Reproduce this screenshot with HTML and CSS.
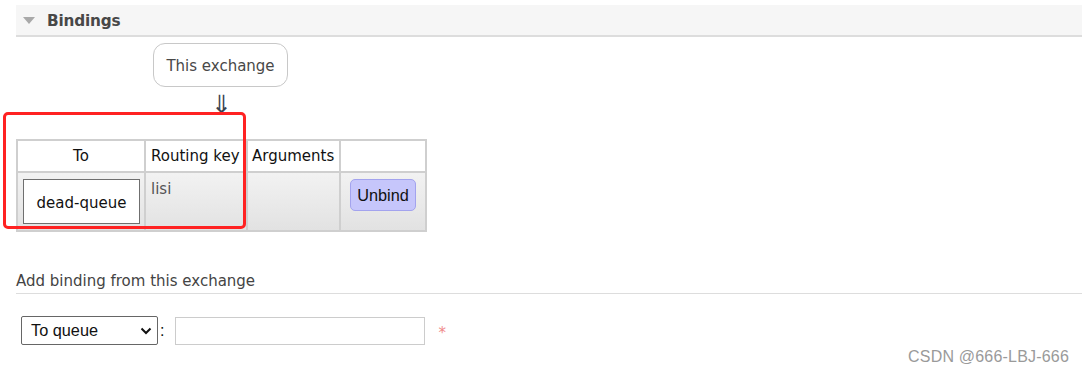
FILE: index.html
```html
<!DOCTYPE html>
<html>
<head>
<meta charset="utf-8">
<link rel="stylesheet" href="styles.css">
</head>
<body>
<div class="page">
  <div class="section-header">
    <span class="triangle"></span>
    <h2 class="section-title">Bindings</h2>
  </div>
  <div class="diagram">
    <div class="node">This exchange</div>
    <div class="arrow">⇓</div>
  </div>
  <table class="list">
    <thead>
      <tr>
        <th class="col-to">To</th>
        <th class="col-key">Routing key</th>
        <th class="col-args">Arguments</th>
        <th class="col-act"></th>
      </tr>
    </thead>
    <tbody>
      <tr>
        <td class="cell-to"><span class="queue-box">dead-queue</span></td>
        <td class="cell-key">lisi</td>
        <td class="cell-args"></td>
        <td class="cell-act"><button class="btn-unbind">Unbind</button></td>
      </tr>
    </tbody>
  </table>
  <h3 class="sub-title">Add binding from this exchange</h3>
  <div class="form-row">
    <div class="select-box">To queue<svg class="chev" width="12" height="8" viewBox="0 0 12 8"><path d="M1.5 1.5 L6 6 L10.5 1.5" fill="none" stroke="#111" stroke-width="2"/></svg></div>
    <span class="colon">:</span>
    <div class="text-input"></div>
    <span class="mand">*</span>
  </div>
  <div class="annotation"></div>
  <div class="watermark">CSDN @666-LBJ-666</div>
</div>
</body>
</html>
```
FILE: styles.css
```css
html, body { margin: 0; padding: 0; background: #fff; }
.page {
  position: relative;
  width: 1083px;
  height: 375px;
  overflow: hidden;
  font-family: "DejaVu Sans", Verdana, sans-serif;
  color: #484848;
}
.section-header {
  margin: 5px 1px 0 16px;
  height: 30px;
  background: #f6f6f6;
  border-bottom: 2px solid #dddddd;
  display: flex;
  align-items: center;
}
.triangle {
  width: 0; height: 0;
  margin-left: 7px;
  margin-right: 11px;
  margin-top: 1px;
  border-left: 6.5px solid transparent;
  border-right: 6.5px solid transparent;
  border-top: 7px solid #a9a9a9;
}
.section-title {
  margin: 1px 0 0 1px;
  font-size: 15.3px;
  font-weight: bold;
  color: #484848;
  letter-spacing: -0.2px;
}
.diagram {
  padding-left: 153px;
  padding-top: 6px;
}
.node {
  width: 133px;
  height: 39px;
  padding-top: 3px;
  border: 1px solid #c8c8c8;
  border-radius: 12px;
  display: flex;
  align-items: center;
  justify-content: center;
  font-size: 15px;
  line-height: 15px;
  color: #484848;
}
.arrow {
  margin-left: 58px;
  width: 20px;
  height: 22px;
  margin-top: 7px;
  margin-bottom: 23px;
  font-size: 25px;
  line-height: 22px;
  color: #3a4452;
  font-family: "DejaVu Sans", sans-serif;
}
table.list {
  margin: 0 0 0 16px;
  border-collapse: collapse;
  font-size: 15px;
}
table.list th, table.list td {
  border: 2px solid #cfcfcf;
  padding: 0;
}
table.list th {
  height: 30px;
  font-weight: normal;
  color: #111;
  background: #fff;
  text-align: left;
  padding-left: 5px;
}
table.list th.col-to { width: 126px; text-align: center; padding-left: 0; }
table.list th.col-key { width: 95px; }
table.list th.col-args { width: 87px; padding-left: 4px; }
table.list th.col-act { width: 79px; }
table.list td {
  height: 57px;
  background: linear-gradient(#f2f2f2, #e2e2e2);
  vertical-align: top;
}
.queue-box {
  display: flex;
  align-items: center;
  justify-content: center;
  height: 45px;
  margin: 6px 4px 0 5px;
  border: 1px solid #6f6f6f;
  background: #fff;
  color: #111;
  padding-top: 3px;
  box-sizing: border-box;
}
table.list td.cell-key { padding: 7px 0 0 5px; height: 50px; color: #555; }
table.list td.cell-act { padding: 0; }
.btn-unbind {
  display: block;
  margin: 6px 0 0 9px;
  font-family: "Liberation Sans", Arial, sans-serif;
  font-size: 16.3px;
  color: #111;
  background: #c6c6fb;
  border: 1px solid #a3a3ee;
  border-radius: 5px;
  width: 66px;
  height: 32px;
  padding: 0;
}
.sub-title {
  margin: 40px 1px 0 16px;
  padding-bottom: 3px;
  font-size: 15px;
  font-weight: normal;
  color: #444;
  border-bottom: 1px solid #dddddd;
  line-height: 18px;
}
.form-row {
  display: flex;
  align-items: center;
  margin: 22px 0 0 21px;
}
.select-box {
  width: 137px;
  height: 29px;
  box-sizing: border-box;
  border: 1px solid #666;
  border-radius: 2px;
  font-family: "Liberation Sans", Arial, sans-serif;
  font-size: 16.3px;
  color: #111;
  display: flex;
  align-items: center;
  justify-content: space-between;
  padding: 0 5px 0 9px;
}
.colon {
  font-family: "Liberation Sans", Arial, sans-serif;
  font-size: 16px;
  color: #111;
  margin: 0 11px 0 2px;
}
.text-input {
  width: 250px;
  height: 28px;
  box-sizing: border-box;
  border: 1px solid #cccccc;
}
.mand {
  margin-left: 13px;
  margin-top: 4px;
  color: #f08a8a;
  font-size: 15px;
}
.annotation {
  position: absolute;
  left: 3px;
  top: 112px;
  width: 243px;
  height: 117px;
  box-sizing: border-box;
  border: 3px solid #ff2222;
  border-radius: 5px;
}
.watermark {
  position: absolute;
  left: 908px;
  top: 348px;
  font-family: "Liberation Sans", Arial, sans-serif;
  font-size: 16px;
  letter-spacing: 0.2px;
  color: #9a9a9a;
}
```
